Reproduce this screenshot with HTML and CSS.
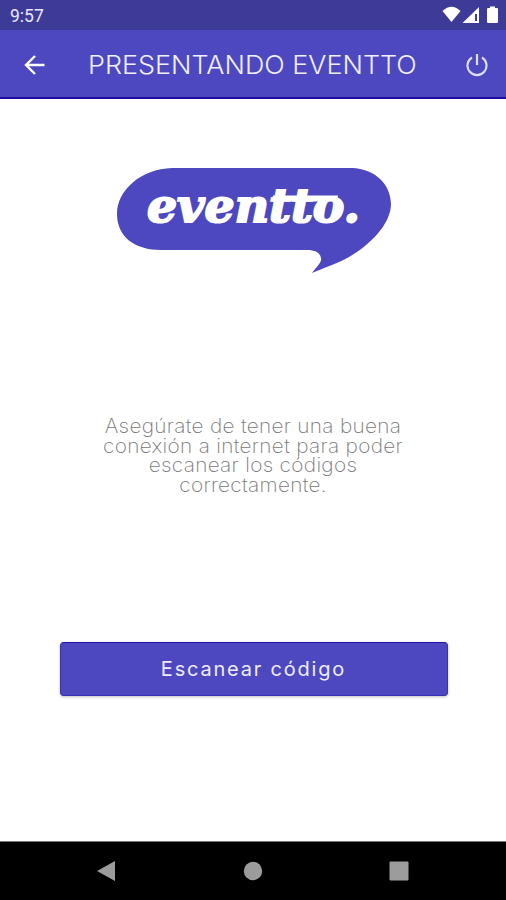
FILE: index.html
```
<!DOCTYPE html>
<html lang="es">
<head>
    <meta charset="UTF-8">
    <meta name="viewport" content="width=device-width, initial-scale=1.0">
    <title>Eventto</title>
    <link rel="stylesheet" href="styles.css">
</head>
<body>
    <div class="screen">
        <div class="status-bar">
            <span class="time">9:57</span>
            <svg class="status-icons" width="56" height="20" viewBox="0 0 56 20">
                <path d="M0.5 5Q9.500 -3.500 18.500 5L9.500 16Z"/>
                <path fill-rule="evenodd" d="M37 1V17H20.500ZM33 8V15H35V8Z"/>
                <path d="M46 2H48V0.500H53V2H55Q56 2 56 3V16Q56 17 55 17H46Q45 17 45 16V3Q45 2 46 2Z"/>
            </svg>
        </div>

        <header class="toolbar">
            <button class="icon-button" aria-label="Volver">
                <svg width="22" height="22" viewBox="0 0 22 22">
                    <path d="M20.500 11H2.500M11 2L2 11L11 20"/>
                </svg>
            </button>
            <h1>PRESENTANDO EVENTTO</h1>
            <button class="icon-button power" aria-label="Salir">
                <svg width="22" height="24" viewBox="0 0 22 24">
                    <path d="M11 1V12M6 4.500A9.500 9.500 0 1 0 16 4.500"/>
                </svg>
            </button>
        </header>

        <main>
            <svg class="logo" width="276" height="108" viewBox="0 0 276 108">
                <path d="M56 1H236C259 2 275 17 275 38C274 59 252 79 233 90C221 97 207 101 196 106C202 98 206 95 205 91C204 86 200 83 191 83H45C19 83 1 70 1 47C1 23 25 2 56 1Z"/>
                <text x="31" y="55" textLength="213" lengthAdjust="spacingAndGlyphs">eventto.</text>
                <path class="bar" d="M157 28.500H222L221 34.500H156Z"/>
            </svg>

            <p class="message">Asegúrate de tener una buena conexión a internet para poder escanear los códigos correctamente.</p>

            <button class="scan-button">Escanear código</button>
        </main>

        <nav class="nav-bar">
            <svg width="20" height="22" viewBox="0 0 20 22"><path d="M1 11L19 1V21Z"/></svg>
            <svg width="20" height="20" viewBox="0 0 20 20"><circle cx="10" cy="10" r="9.200"/></svg>
            <svg width="20" height="20" viewBox="0 0 20 20"><rect x="0.500" y="0.500" width="19" height="19" rx="1"/></svg>
        </nav>
    </div>
</body>
</html>
```
FILE: styles.css
```
* {
    margin: 0;
    padding: 0;
    box-sizing: border-box;
}
body {
    font-family: Inter, sans-serif;
    background: white;
}
button {
    border: none;
    cursor: pointer;
}
svg {
    display: block;
}
.screen {
    height: 900px;
    display: flex;
    flex-direction: column;
}
.status-bar {
    height: 30px;
    background: #3e3a98;
    display: flex;
    justify-content: space-between;
    padding: 6px 8px 0 10px;
}
.time {
    font-family: Roboto, sans-serif;
    font-size: 17.5px;
    line-height: 21px;
    color: #e8e8fc;
}
.status-icons {
    fill: white;
}
.toolbar {
    height: 69px;
    background: #4d48bf;
    border-bottom: 2px solid #1d0ba4;
    display: flex;
    align-items: center;
    padding: 2px 18px 0 24px;
}
.icon-button {
    background: none;
    width: 22px;
}
.icon-button svg {
    fill: none;
    stroke: white;
    stroke-width: 2.4;
}
.icon-button.power {
    margin-left: auto;
}
.power svg {
    stroke: #dedcff;
    stroke-width: 2.2;
}
.toolbar h1 {
    margin-left: 42px;
    font-size: 25px;
    font-weight: 300;
    color: #f0efff;
    white-space: nowrap;
    transform: scaleX(1.077);
    transform-origin: left;
}
main {
    flex: 1;
    display: flex;
    flex-direction: column;
    align-items: center;
}
.logo {
    margin-top: 68px;
    margin-left: 2px;
    fill: #4d48bf;
}
.logo text {
    font-family: "DejaVu Serif", serif;
    font-size: 46px;
    font-weight: 700;
    font-style: italic;
    fill: white;
    stroke: white;
    stroke-width: 2;
}
.logo .bar {
    fill: white;
}
.message {
    width: 300px;
    margin-top: 142px;
    font-size: 19.5px;
    font-weight: 200;
    line-height: 19.7px;
    letter-spacing: 0.3px;
    text-align: center;
    color: #777;
    transform: scaleX(1.065);
}
.scan-button {
    margin-top: 146px;
    margin-left: 1px;
    width: 388px;
    height: 54px;
    background: #4d48bf;
    border: 1px solid #3a2eb2;
    border-top-color: #2412a8;
    border-radius: 4px;
    box-shadow: 0 1px 3px rgba(0, 0, 0, 0.25);
    color: #eeedff;
    font-family: Inter, sans-serif;
    font-size: 20px;
    font-weight: 400;
    letter-spacing: 1.8px;
}
.nav-bar {
    height: 59px;
    background: black;
    border-top: 1px solid #777;
    display: flex;
    justify-content: space-between;
    align-items: center;
    padding: 0 97px 0 96px;
}
.nav-bar svg {
    fill: #9c9c9c;
}
```
